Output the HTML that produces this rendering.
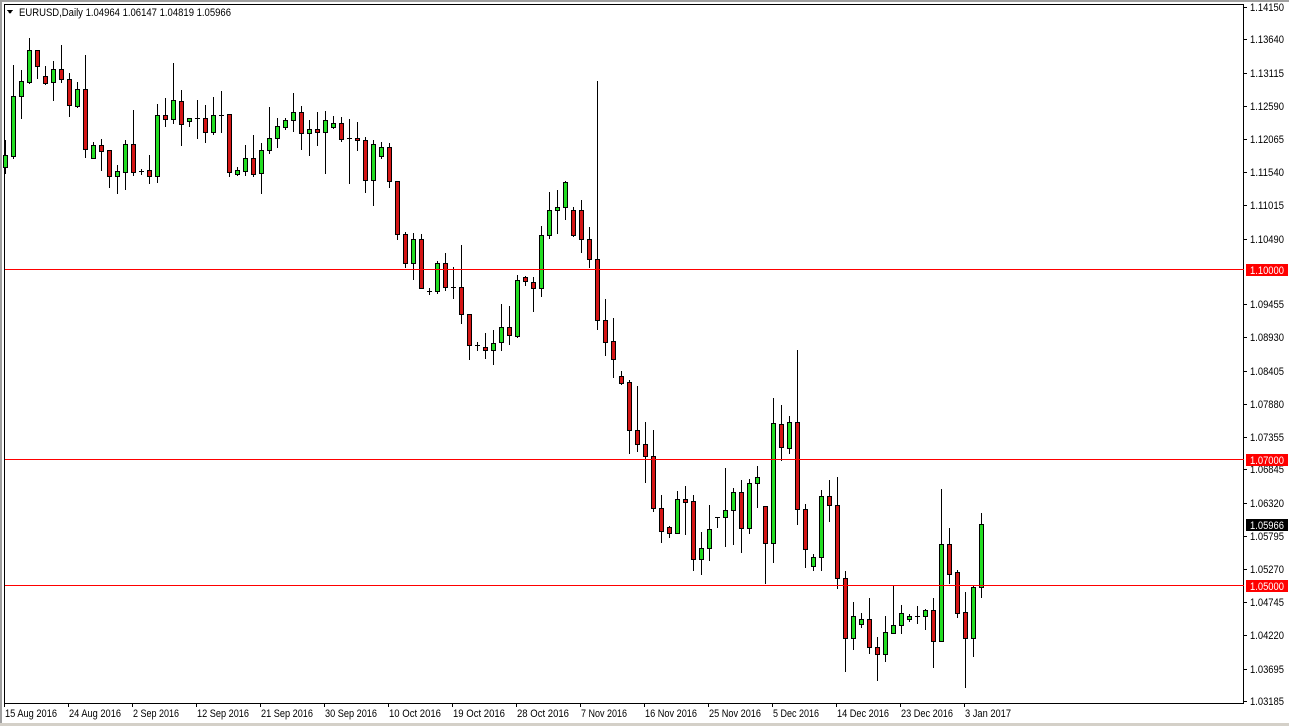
<!DOCTYPE html>
<html><head><meta charset="utf-8"><style>
html,body{margin:0;padding:0;background:#fff;width:1289px;height:726px;overflow:hidden;position:relative}
svg{display:block}
text{font-family:"Liberation Sans",sans-serif;font-size:11px;fill:#000}
.hl{position:absolute;left:5px;width:1239px;height:1px;background:#ff0000}
</style></head><body>
<svg id="s" width="1289" height="726" xmlns="http://www.w3.org/2000/svg" shape-rendering="crispEdges">
<rect x="0" y="0" width="1289" height="726" fill="#fff"/>
<rect x="0" y="0" width="1289" height="2" fill="#a0a0a0"/>
<rect x="0" y="0" width="2" height="726" fill="#a0a0a0"/>
<rect x="0" y="723" width="1289" height="3" fill="#d4d0c8"/>
<rect x="4.5" y="4.5" width="1239" height="699" fill="none" stroke="#000" stroke-width="1"/>
<polygon points="7,10 13,10 10,14" fill="#000"/>
<text x="19" y="16" textLength="212" lengthAdjust="spacingAndGlyphs">EURUSD,Daily  1.04964 1.06147 1.04819 1.05966</text>
<g id="c"></g>
<g id="ax"></g>
</svg>
<div class="hl" style="top:269px"></div>
<div class="hl" style="top:459px"></div>
<div class="hl" style="top:585px"></div>
<script>
var D=[
[155,167,140,173,'g'],[96,156,65,158,'g'],[81,96,70,118,'g'],[50,82,38,83,'g'],[50,66,50,78,'r'],[76,83,66,84,'r'],[69,82,61,100,'g'],[69,79,45,82,'r'],[79,105,73,116,'r'],[89,106,82,107,'g'],
[89,149,55,157,'r'],[145,158,142,158,'g'],[145,151,139,170,'r'],[150,176,150,187,'r'],[171,176,165,193,'g'],[144,172,140,189,'g'],[144,172,110,175,'r'],[171,171,169,174,'d'],[170,176,155,183,'r'],[115,176,104,182,'g'],
[115,119,98,126,'r'],[100,119,63,123,'g'],[101,124,90,145,'r'],[118,121,118,126,'g'],[118,118,100,138,'d'],[118,132,105,142,'r'],[115,132,97,134,'g'],[115,115,91,132,'d'],[114,172,114,176,'r'],[170,174,167,175,'g'],
[158,171,145,175,'g'],[158,174,135,176,'r'],[150,173,143,193,'g'],[138,150,107,153,'g'],[126,138,118,147,'g'],[120,127,118,129,'g'],[112,120,93,131,'g'],[112,133,106,149,'r'],[129,133,120,155,'g'],[129,132,112,145,'r'],
[120,132,111,173,'g'],[123,127,116,128,'g'],[123,139,117,141,'r'],[138,138,119,183,'d'],[138,140,122,150,'r'],[140,180,137,192,'r'],[144,180,140,205,'g'],[147,156,142,158,'g'],[147,181,143,187,'r'],[181,234,181,239,'r'],
[234,263,232,267,'r'],[239,263,233,279,'g'],[239,288,234,288,'r'],[291,291,288,294,'d'],[263,291,261,293,'g'],[263,287,253,290,'r'],[287,287,267,298,'d'],[287,314,245,323,'r'],[314,345,314,359,'r'],[345,345,342,350,'d'],
[347,350,333,358,'r'],[343,350,330,364,'g'],[327,342,304,350,'g'],[327,335,306,344,'r'],[280,336,275,337,'g'],[277,281,276,285,'r'],[282,288,277,311,'r'],[235,288,226,296,'g'],[210,235,192,238,'g'],[207,210,190,233,'g'],
[182,207,181,219,'g'],[210,235,207,236,'r'],[210,239,200,252,'r'],[239,259,227,267,'r'],[259,320,81,329,'r'],[320,342,299,355,'r'],[341,359,318,377,'r'],[376,383,371,384,'r'],[382,430,380,453,'r'],[430,444,386,451,'r'],
[444,456,422,482,'r'],[456,508,430,511,'r'],[508,531,495,542,'r'],[527,533,526,537,'r'],[499,533,491,533,'g'],[499,502,486,534,'r'],[501,559,495,570,'r'],[548,559,532,574,'g'],[529,548,505,560,'g'],[517,517,517,527,'d'],
[510,517,468,546,'g'],[492,510,488,544,'g'],[492,528,480,552,'r'],[483,528,479,533,'g'],[477,483,466,507,'g'],[506,543,506,583,'r'],[423,543,398,562,'g'],[424,447,405,460,'r'],[422,448,416,453,'g'],[422,509,350,524,'r'],
[509,549,504,567,'r'],[557,566,554,570,'g'],[496,557,490,570,'g'],[496,505,480,521,'r'],[505,578,477,588,'r'],[578,638,571,671,'r'],[616,638,602,649,'g'],[619,624,613,627,'g'],[619,647,598,653,'r'],[647,654,637,680,'r'],
[632,654,616,661,'g'],[625,633,585,633,'g'],[613,625,605,633,'g'],[616,619,614,621,'g'],[616,616,606,623,'d'],[610,616,609,629,'g'],[610,641,598,667,'r'],[544,641,489,641,'g'],[544,574,528,583,'r'],[572,613,570,617,'r'],
[612,638,592,687,'r'],[587,638,586,656,'g'],[524,587,513,597,'g']];
var h='';
D.forEach(function(d,i){var cx=5+8*i,t=d[0],b=d[1];
h+='<rect x="'+cx+'" y="'+d[2]+'" width="1" height="'+(d[3]-d[2]+1)+'" fill="#000"/>';
if(d[4]=='d'){h+='<rect x="'+(cx-2)+'" y="'+t+'" width="5" height="1" fill="#000"/>';}
else{h+='<rect x="'+(cx-2)+'" y="'+t+'" width="5" height="'+(b-t+1)+'" fill="#000"/>';
if(b-t>1)h+='<rect x="'+(cx-1)+'" y="'+(t+1)+'" width="3" height="'+(b-t-1)+'" fill="'+(d[4]=='g'?'#22dd22':'#d41515')+'"/>';}
});
document.getElementById('c').innerHTML=h;
var P=['1.14150','1.13640','1.13115','1.12590','1.12065','1.11540','1.11015','1.10490','1.09455','1.08930','1.08405','1.07880','1.07355','1.06845','1.06320','1.05795','1.05270','1.04745','1.04220','1.03695','1.03185'];
var a='';
function Y(p){return Math.round(7+(1.1415-p)*6329);}
P.forEach(function(p){var y=Y(parseFloat(p));a+='<rect x="1244" y="'+y+'" width="3" height="1" fill="#000"/><text x="1250" y="'+(y+4)+'" textLength="34" lengthAdjust="spacingAndGlyphs">'+p+'</text>';});
[['1.10000','#ff0000','#fff'],['1.07000','#ff0000','#fff'],['1.05966','#000','#fff'],['1.05000','#ff0000','#fff']].forEach(function(q){var y=Y(parseFloat(q[0]));a+='<rect x="1246" y="'+(y-6)+'" width="42" height="12" fill="'+q[1]+'"/><text x="1250" y="'+(y+4)+'" textLength="34" lengthAdjust="spacingAndGlyphs" style="fill:'+q[2]+'">'+q[0]+'</text>';});
var L=['15 Aug 2016','24 Aug 2016','2 Sep 2016','12 Sep 2016','21 Sep 2016','30 Sep 2016','10 Oct 2016','19 Oct 2016','28 Oct 2016','7 Nov 2016','16 Nov 2016','25 Nov 2016','5 Dec 2016','14 Dec 2016','23 Dec 2016','3 Jan 2017'];
L.forEach(function(l,i){var x=4+64*i;var w=l.length==11?52:46;a+='<rect x="'+x+'" y="704" width="1" height="3" fill="#000"/><text x="'+(x+1)+'" y="717" textLength="'+w+'" lengthAdjust="spacingAndGlyphs">'+l+'</text>';});
document.getElementById('ax').innerHTML=a;
</script>
</body></html>
